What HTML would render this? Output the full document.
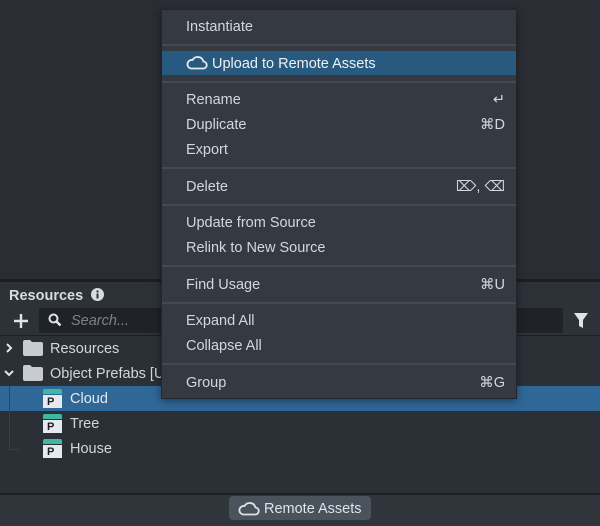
<!DOCTYPE html>
<html><head><style>
*{margin:0;padding:0;box-sizing:border-box}
body{width:600px;height:526px;overflow:hidden;background:#2a2d34;font-family:"Liberation Sans",sans-serif;position:relative;color:#d3d7dd}
.abs{position:absolute}
.t{position:absolute;font-size:14.5px;line-height:16px;color:#d3d7dd}
.menu{left:161px;top:9px;width:356px;height:390px;background:#353a42;border:1px solid #22252a;box-shadow:0 2px 8px rgba(0,0,0,.4)}
.sep{position:absolute;left:0;width:354px;height:2px;background:#444a53}
.mi{position:absolute;left:24px;font-size:14.5px;line-height:16px;color:#d3d7dd}
.sc{position:absolute;right:11px;font-size:14.5px;line-height:16px;color:#d3d7dd}
.folder{position:absolute;width:20px;height:16px}
.pf{position:absolute;width:19px;height:18px}
</style></head><body>
<div class="abs" style="left:0;top:279px;width:600px;height:3px;background:#1c1e22"></div>
<div class="abs" style="left:0;top:282px;width:600px;height:25px;background:#2d3138"></div>
<div class="t" style="left:9px;top:288px;font-weight:bold;color:#d8dce2">Resources</div>
<svg class="abs" style="left:91px;top:288px" width="13" height="13"><circle cx="6.5" cy="6.5" r="6.5" fill="#d8dce2"/><rect x="5.5" y="5.5" width="2" height="5" fill="#2d3138"/><circle cx="6.5" cy="3.5" r="1.1" fill="#2d3138"/></svg>
<div class="abs" style="left:0;top:307px;width:600px;height:28px;background:#2d3138"></div>
<svg class="abs" style="left:13px;top:313px" width="16" height="16"><path d="M8 1v14M1 8h14" stroke="#e0e3e8" stroke-width="2.4"/></svg>
<div class="abs" style="left:39px;top:308px;width:524px;height:25px;background:#1f2227;border-radius:2px"></div>
<svg class="abs" style="left:48px;top:313px" width="14" height="14"><circle cx="5.5" cy="5.5" r="4" stroke="#e0e3e8" stroke-width="2" fill="none"/><path d="M8.5 8.5l4 4" stroke="#e0e3e8" stroke-width="2.5"/></svg>
<div class="t" style="left:71px;top:313px;font-style:italic;color:#7d838c">Search...</div>
<svg class="abs" style="left:574px;top:313px" width="14" height="15"><path d="M0 0h14L9 7v8l-4-2V7z" fill="#e0e3e8"/></svg>
<div class="abs" style="left:0;top:335px;width:600px;height:1px;background:#1c1e22"></div>
<div class="abs" style="left:0;top:336px;width:600px;height:157px;background:#2b2f36"></div>
<svg class="abs" style="left:5px;top:342px" width="8" height="12"><path d="M2 2l4 4-4 4" stroke="#e0e3e8" stroke-width="2" fill="none"/></svg>
<svg class="folder" style="left:23px;top:340px" viewBox="0 0 20 16"><path d="M0 2a2 2 0 0 1 2-2h5l2 2h9a2 2 0 0 1 2 2v10a2 2 0 0 1-2 2H2a2 2 0 0 1-2-2z" fill="#c8ccd2"/></svg>
<div class="t" style="left:50px;top:341px">Resources</div>
<svg class="abs" style="left:3px;top:369px" width="12" height="8"><path d="M2 2l4 4 4-4" stroke="#e0e3e8" stroke-width="2" fill="none"/></svg>
<svg class="folder" style="left:23px;top:365px" viewBox="0 0 20 16"><path d="M0 2a2 2 0 0 1 2-2h5l2 2h9a2 2 0 0 1 2 2v10a2 2 0 0 1-2 2H2a2 2 0 0 1-2-2z" fill="#c8ccd2"/></svg>
<div class="t" style="left:50px;top:366px">Object Prefabs [U</div>
<div class="abs" style="left:0;top:386px;width:600px;height:25px;background:#2f6797"></div>
<div class="abs" style="left:9px;top:386px;width:1px;height:64px;background:#3b4048"></div>
<div class="abs" style="left:9px;top:449px;width:10px;height:1px;background:#3b4048"></div>
<div class="pf" style="left:43px;top:389px"><div style="height:5px;background:#3fb8a2;border-radius:2px 2px 0 0"></div><div style="height:13px;background:#e6e9ee;margin-top:1px;font:bold 11px 'Liberation Sans';color:#1a1d22;padding-left:4px;line-height:14px">P</div></div>
<div class="t" style="left:70px;top:391px;color:#e6e9ee">Cloud</div>
<div class="pf" style="left:43px;top:414px"><div style="height:5px;background:#3fb8a2;border-radius:2px 2px 0 0"></div><div style="height:13px;background:#e6e9ee;margin-top:1px;font:bold 11px 'Liberation Sans';color:#1a1d22;padding-left:4px;line-height:14px">P</div></div>
<div class="t" style="left:70px;top:416px">Tree</div>
<div class="pf" style="left:43px;top:439px"><div style="height:5px;background:#3fb8a2;border-radius:2px 2px 0 0"></div><div style="height:13px;background:#e6e9ee;margin-top:1px;font:bold 11px 'Liberation Sans';color:#1a1d22;padding-left:4px;line-height:14px">P</div></div>
<div class="t" style="left:70px;top:441px">House</div>
<div class="abs" style="left:0;top:493px;width:600px;height:2px;background:#1c1e22"></div>
<div class="abs" style="left:0;top:495px;width:600px;height:31px;background:#30343b"></div>
<div class="abs" style="left:229px;top:496px;width:142px;height:24px;background:#4a525c;border-radius:4px"></div>
<svg class="abs" style="left:238px;top:501px" width="22" height="15"><path d="M5 13.5h12a3.5 3.5 0 0 0 0.5-7A6 6 0 0 0 6.5 5 4.2 4.2 0 0 0 5 13.5z" stroke="#dfe3e8" stroke-width="1.8" fill="none"/></svg>
<div class="t" style="left:264px;top:501px;color:#dfe3e8">Remote Assets</div>

<div class="abs menu">
<div class="mi" style="top:9px">Instantiate</div>
<div class="sep" style="top:34px"></div>
<div class="abs" style="left:0;top:41px;width:354px;height:24px;background:#285a80"></div>
<svg class="abs" style="left:24px;top:45px" width="22" height="15"><path d="M5 13.5h12a3.5 3.5 0 0 0 0.5-7A6 6 0 0 0 6.5 5 4.2 4.2 0 0 0 5 13.5z" stroke="#e6e9ee" stroke-width="1.8" fill="none"/></svg>
<div class="mi" style="left:50px;top:46px;color:#eef0f3">Upload to Remote Assets</div>
<div class="sep" style="top:71px"></div>
<div class="mi" style="top:82px">Rename</div><div class="sc" style="top:82px">↵</div>
<div class="mi" style="top:107px">Duplicate</div><div class="sc" style="top:107px">⌘D</div>
<div class="mi" style="top:132px">Export</div>
<div class="sep" style="top:157px"></div>
<div class="mi" style="top:169px">Delete</div><div class="sc" style="top:169px">⌦, ⌫</div>
<div class="sep" style="top:194px"></div>
<div class="mi" style="top:205px">Update from Source</div>
<div class="mi" style="top:230px">Relink to New Source</div>
<div class="sep" style="top:255px"></div>
<div class="mi" style="top:267px">Find Usage</div><div class="sc" style="top:267px">⌘U</div>
<div class="sep" style="top:292px"></div>
<div class="mi" style="top:303px">Expand All</div>
<div class="mi" style="top:328px">Collapse All</div>
<div class="sep" style="top:353px"></div>
<div class="mi" style="top:365px">Group</div><div class="sc" style="top:365px">⌘G</div>
</div>
</body></html>
